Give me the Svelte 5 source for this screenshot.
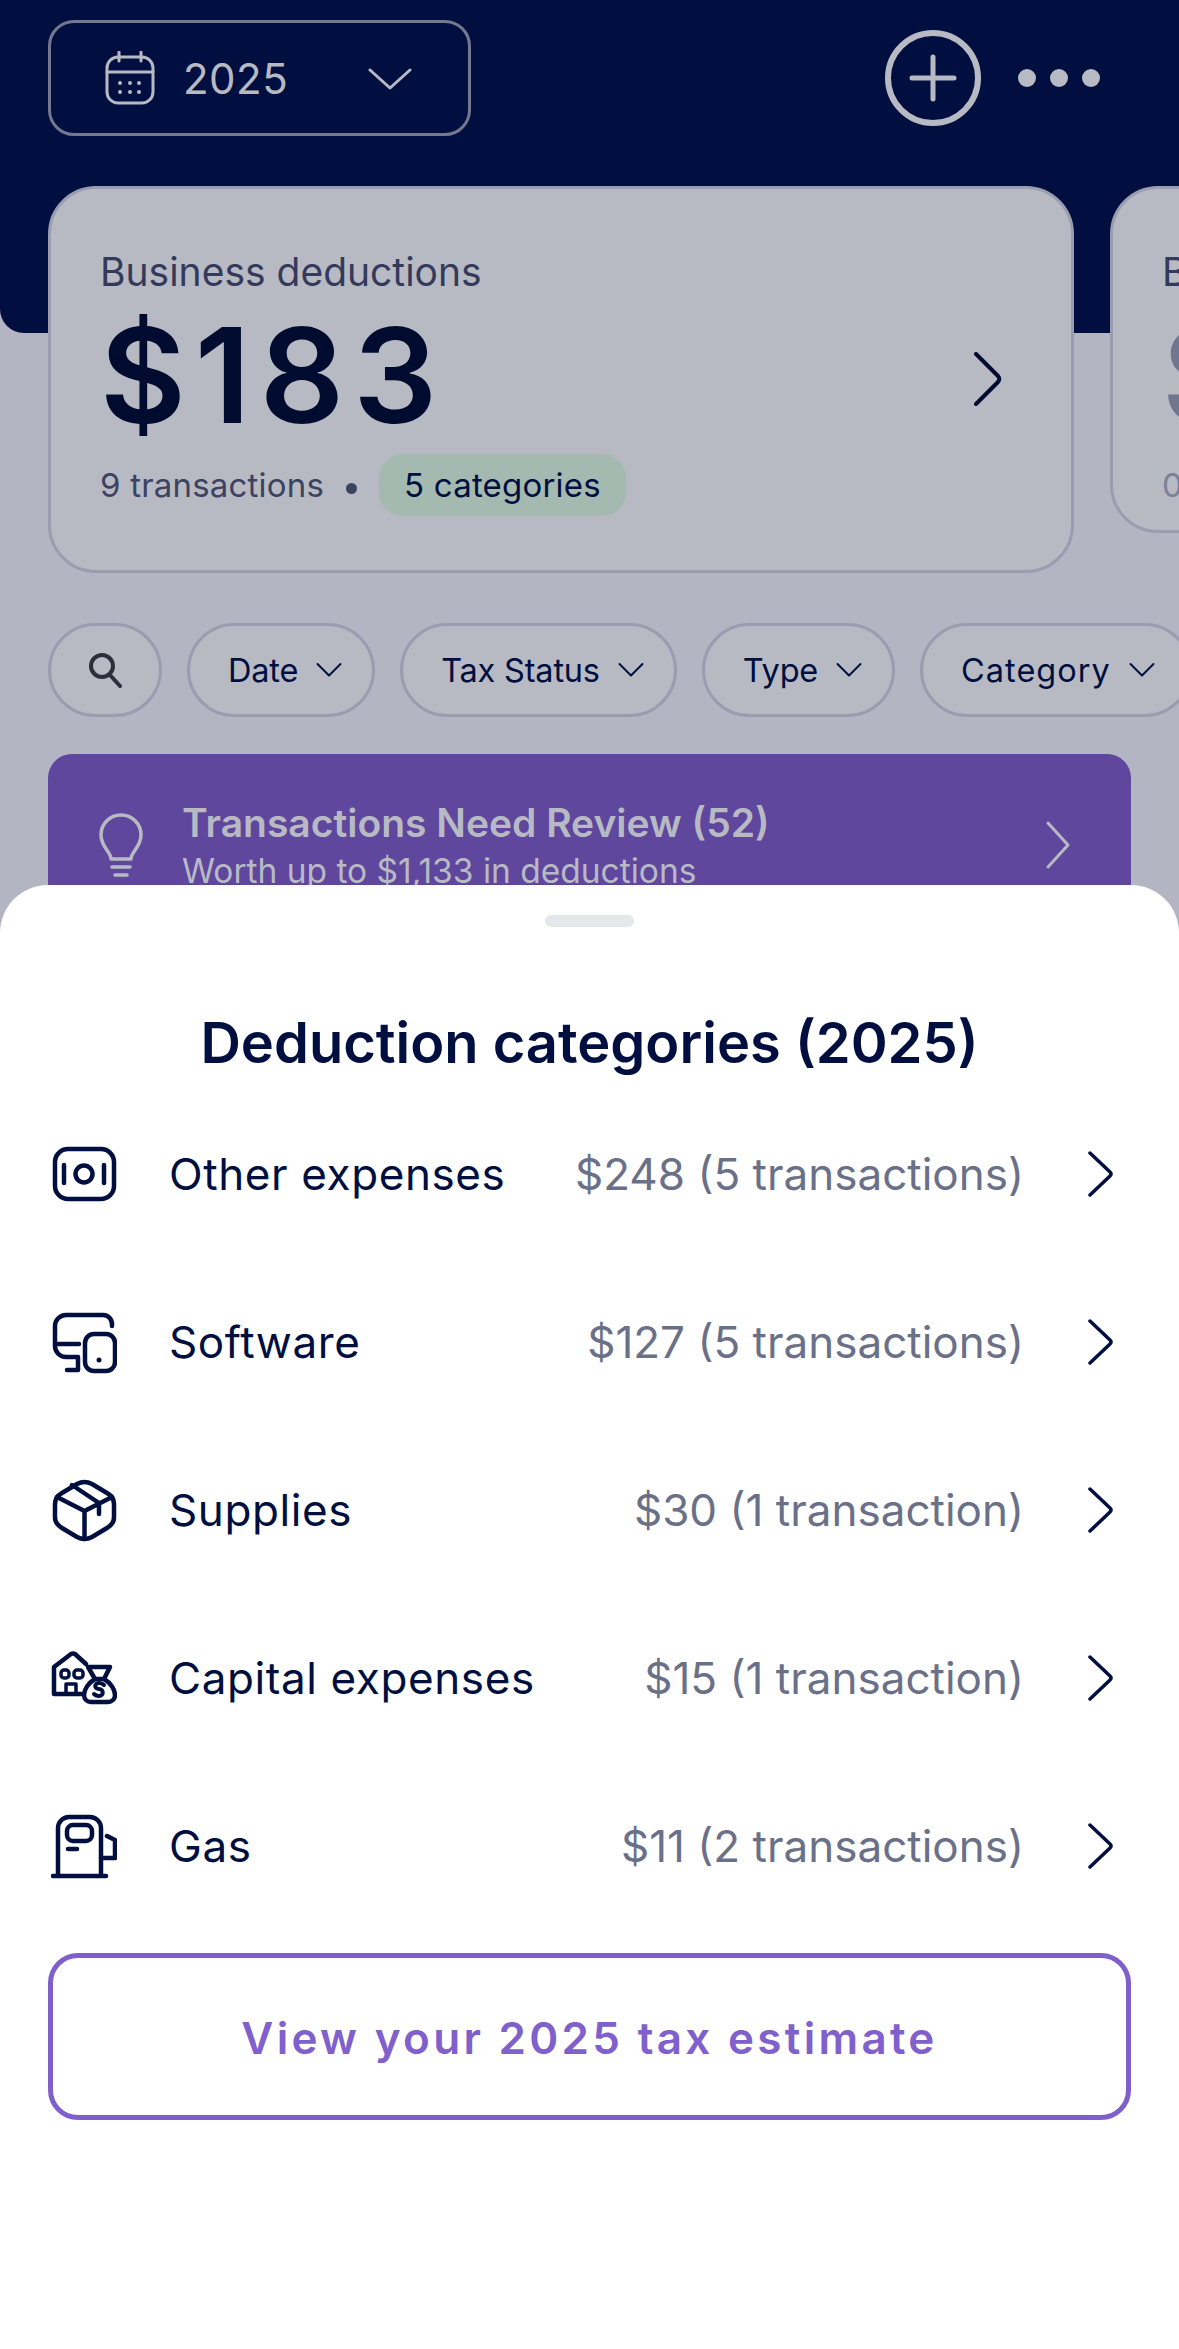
<script>
  const filters = ['Date', 'Tax Status', 'Type', 'Category'];
  const rows = [
    { name: 'Other expenses', amount: '$248 (5 transactions)', icon: 'other' },
    { name: 'Software', amount: '$127 (5 transactions)', icon: 'software' },
    { name: 'Supplies', amount: '$30 (1 transaction)', icon: 'supplies' },
    { name: 'Capital expenses', amount: '$15 (1 transaction)', icon: 'capital' },
    { name: 'Gas', amount: '$11 (2 transactions)', icon: 'gas' },
  ];
</script>

<div class="page">
  <div class="navy"></div>

  <header class="top">
    <button class="year">
      <svg class="cal" width="50" height="54" viewBox="0 0 50 54" fill="none" stroke="#b8bac3" stroke-width="3">
        <rect x="2" y="6" width="46" height="46" rx="11" />
        <path d="M2 21h46M14 1v9M36 1v9" stroke-linecap="round" />
        <g fill="#b8bac3" stroke="none">
          <circle cx="15" cy="32" r="2" /><circle cx="25" cy="32" r="2" /><circle cx="34" cy="32" r="2" />
          <circle cx="15" cy="41" r="2" /><circle cx="25" cy="41" r="2" /><circle cx="34" cy="41" r="2" />
        </g>
      </svg>
      <span class="year-txt">2025</span>
      <svg class="year-chev" width="44" height="24" viewBox="0 0 44 24" fill="none" stroke="#b8bac3" stroke-width="3" stroke-linecap="round" stroke-linejoin="round">
        <path d="M2 3l20 18L42 3" />
      </svg>
    </button>
    <div class="top-actions">
      <svg width="96" height="96" viewBox="0 0 96 96" fill="none" stroke="#b8bac3">
        <circle cx="48" cy="48" r="45" stroke-width="6" />
        <path d="M48 27v42M27 48h42" stroke-width="5" stroke-linecap="round" />
      </svg>
      <div class="dots"><i></i><i></i><i></i></div>
    </div>
  </header>

  <div class="cards">
    <div class="card">
      <div class="card-label">Business deductions</div>
      <div class="card-amount">$183</div>
      <div class="card-meta">
        <span>9 transactions</span>
        <i class="meta-dot"></i>
        <span class="pill">5 categories</span>
      </div>
      <svg class="card-chev" width="30" height="54" viewBox="0 0 30 54" fill="none" stroke="#000b30" stroke-width="4" stroke-linecap="round" stroke-linejoin="round">
        <path d="M3 2l22 22q2.500 3 0 6L3 52" />
      </svg>
    </div>
    <div class="card second">
      <div class="card-label">Business</div>
      <div class="card-amount">$0</div>
      <div class="card-meta"><span>0 transactions</span></div>
    </div>
  </div>

  <div class="filters">
    <button class="chip search" aria-label="Search">
      <svg width="36" height="36" viewBox="0 0 36 36" fill="none" stroke="#2c2f3a" stroke-width="4" stroke-linecap="round">
        <circle cx="15" cy="14" r="11" />
        <path d="M23 23l10 11" />
      </svg>
    </button>
    {#each filters as f}
      <button class="chip">
        {f}
        <svg width="26" height="16" viewBox="0 0 26 16" fill="none" stroke="#000f40" stroke-width="2" stroke-linecap="round" stroke-linejoin="round">
          <path d="M1.500 2L13 13.500 24.500 2" />
        </svg>
      </button>
    {/each}
  </div>

  <div class="review">
    <svg width="46" height="64" viewBox="0 0 46 64" fill="none" stroke="#b8bac3" stroke-width="3.5" stroke-linecap="round" stroke-linejoin="round">
      <path d="M13 46c0-7-10-12-10-24a20 20 0 0 1 40 0c0 12-10 17-10 24z" />
      <path d="M14 54h18M17 62h12" />
    </svg>
    <div class="review-txt">
      <div class="review-title">Transactions Need Review (52)</div>
      <div class="review-sub">Worth up to $1,133 in deductions</div>
    </div>
    <svg class="review-chev" width="26" height="48" viewBox="0 0 26 48" fill="none" stroke="#b8bac3" stroke-width="3" stroke-linecap="round" stroke-linejoin="round">
      <path d="M3 2l20 22L3 46" />
    </svg>
  </div>

  <section class="sheet">
    <div class="handle"></div>
    <h2>Deduction categories (2025)</h2>
    <div class="list">
      {#each rows as r}
        <div class="row">
          <span class="ico">
            <svg width="66" height="66" viewBox="0 0 66 66" fill="none" stroke="#000f40" stroke-width="4.5" stroke-linecap="round" stroke-linejoin="round">
              {#if r.icon === 'other'}
                <rect x="4" y="8" width="59" height="50" rx="13" />
                <path d="M13 24v18M53 24v18" />
                <circle cx="33" cy="33" r="8.500" />
              {:else if r.icon === 'software'}
                <path d="M61 17v-2a9 9 0 0 0-9-9H15A11 11 0 0 0 4 17v20a11 11 0 0 0 11 11h12v13H16M4 35h24" />
                <rect x="34" y="25" width="30" height="37" rx="9" />
                <circle cx="48" cy="51" r="2.500" fill="#000f40" stroke="none" />
              {:else if r.icon === 'supplies'}
                <path d="M26 7q7.500-4 15 0l15 9q7 4 7 11v13q0 7-7 11l-15 9q-7.500 4-15 0l-15-9q-7-4-7-11V27q0-7 7-11z" />
                <path d="M6 20l27.500 14L61 20M33.500 34v28M21 8l27 18v11" />
              {:else if r.icon === 'capital'}
                <path d="M31 49H3V22L20 9q2-1 4 0l11 10" />
                <rect x="10" y="25" width="8" height="8" rx="3" stroke-width="3.500" />
                <rect x="23" y="25" width="9" height="8" rx="3" stroke-width="3.500" />
                <path d="M15 49V39h10v8" stroke-width="3.500" />
                <path d="M37 22h22l-6 12h-9z" />
                <path d="M44 34c-7 4-11 11-11 16 0 4 3 7 7 7h17c4 0 7-3 7-7 0-5-4-12-11-16" />
                <path d="M53 40q-2-2-5-2c-5 0-5 6 0 6s5 7 0 7q-3 0-5-2" stroke-width="4" />
              {:else if r.icon === 'gas'}
                <path d="M7 63V15A11 11 0 0 1 18 4h21a11 11 0 0 1 11 11v48M2 63h53" />
                <rect x="16" y="12" width="25" height="16" rx="6" />
                <path d="M17 36h9M50 45h14V27l-8-4" />
              {/if}
            </svg>
          </span>
          <span class="name">{r.name}</span>
          <span class="amt">{r.amount}</span>
          <svg class="row-chev" width="28" height="46" viewBox="0 0 28 46" fill="none" stroke="#000f40" stroke-width="3.5" stroke-linecap="round" stroke-linejoin="round">
            <path d="M3 2l20 19q2 2 0 4L3 44" />
          </svg>
        </div>
      {/each}
    </div>
    <button class="estimate">View your 2025 tax estimate</button>
  </section>
</div>

<style>
  :global(body) { margin: 0; background: #b3b6c2; }
  button { font: inherit; background: none; color: inherit; }

  .page {
    position: relative;
    width: 1179px; height: 2349px;
    overflow: hidden;
    background: #b3b6c2;
    font-family: Inter, "Liberation Sans", sans-serif;
    color: #000f40;
  }
  .navy {
    position: absolute; left: 0; right: 0; top: 0; height: 333px;
    background: #000f40;
    border-radius: 0 0 0 24px;
  }

  .top {
    position: relative;
    display: flex; align-items: flex-start; justify-content: space-between;
    padding: 20px 79px 0 48px;
    height: 186px; box-sizing: border-box;
  }
  .year {
    display: flex; align-items: center;
    width: 423px; height: 116px; box-sizing: border-box;
    border: 3px solid #74788f; border-radius: 26px;
    padding: 0 0 0 54px;
    color: #b8bac3;
  }
  .year-txt { font-size: 42px; margin-left: 28px; letter-spacing: .5px; }
  .year-chev { margin-left: 80px; margin-top: 2px; }
  .top-actions { display: flex; align-items: center; gap: 37px; margin-top: 10px; }
  .dots { display: flex; gap: 14px; }
  .dots i { width: 18px; height: 18px; border-radius: 50%; background: #b8bac3; }

  .cards { position: relative; display: flex; align-items: flex-start; gap: 36px; padding-left: 48px; }
  .card {
    position: relative; flex: none;
    width: 1026px; height: 387px; box-sizing: border-box;
    background: #b8bac3; border: 3px solid #9a9daf; border-radius: 48px;
    padding: 60px 0 0 49px;
  }
  .card-label { font-size: 39px; line-height: 46px; color: #343a5c; }
  .card-amount { font-size: 132px; line-height: 130px; font-weight: 600; color: #000b30; letter-spacing: 9px; margin-top: 15px; }
  .card-meta { display: flex; align-items: center; font-size: 33px; letter-spacing: .2px; color: #3c4262; margin-top: 14px; height: 62px; }
  .meta-dot { width: 11px; height: 11px; border-radius: 50%; background: #3c4262; margin: 6px 22px 0; }
  .pill { background: #a4b9af; color: #000f40; height: 62px; line-height: 62px; padding: 0 25px; border-radius: 24px; }
  .card-chev { position: absolute; right: 68px; top: 163px; }
  .second { height: 347px; }
  .second .card-amount { color: #71768f; }
  .second .card-meta { color: #7c8098; }

  .filters { position: relative; display: flex; gap: 25px; padding-left: 48px; margin-top: 50px; }
  .chip {
    flex: none;
    display: flex; align-items: center; gap: 18px;
    height: 94px; box-sizing: border-box;
    padding: 0 30px 0 38px;
    background: #b8bac3; border: 3px solid #9a9daf; border-radius: 47px;
    font-size: 32.5px; letter-spacing: -.2px; color: #000f40;
  }
  .chip:last-child { letter-spacing: 1px; padding-right: 34px; }
  .search { width: 114px; padding: 0; justify-content: center; }

  .review {
    position: relative;
    display: flex; align-items: center;
    margin: 37px 48px 0;
    height: 182px; box-sizing: border-box;
    background: #5f479e; border-radius: 24px;
    padding: 0 60px 0 50px;
    color: #b8bac3;
  }
  .review-txt { margin-left: 38px; flex: 1; padding-top: 6px; }
  .review-title { font-size: 39px; line-height: 46px; font-weight: 600; }
  .review-sub { font-size: 33.5px; line-height: 50px; }

  .sheet {
    position: absolute; left: 0; right: 0; top: 885px; bottom: 0;
    background: #fff;
    border-radius: 48px 48px 0 0;
    padding: 0 48px;
  }
  .handle { width: 89px; height: 12px; margin: 30px auto 0; background: #e6e7eb; border-radius: 6px; }
  h2 { margin: 80px 0 0; text-align: center; font-size: 56px; line-height: 72px; font-weight: 600; color: #000f40; }

  .list { margin-top: 11px; }
  .row { display: flex; align-items: center; height: 168px; }
  .ico { width: 121px; flex: none; display: flex; margin-left: 3px; margin-right: -3px; }
  .name { font-size: 44px; letter-spacing: .6px; color: #000f40; }
  .amt { margin-left: auto; font-size: 44px; color: #6b7089; }
  .row-chev { margin: 0 16px 0 63px; }

  .estimate {
    display: block; width: 100%; height: 167px; margin-top: 23px; padding-top: 4px;
    border: 5px solid #7f5fcb; border-radius: 30px;
    font-size: 44px; font-weight: 600; letter-spacing: 3.3px; color: #8060cc;
  }
</style>
